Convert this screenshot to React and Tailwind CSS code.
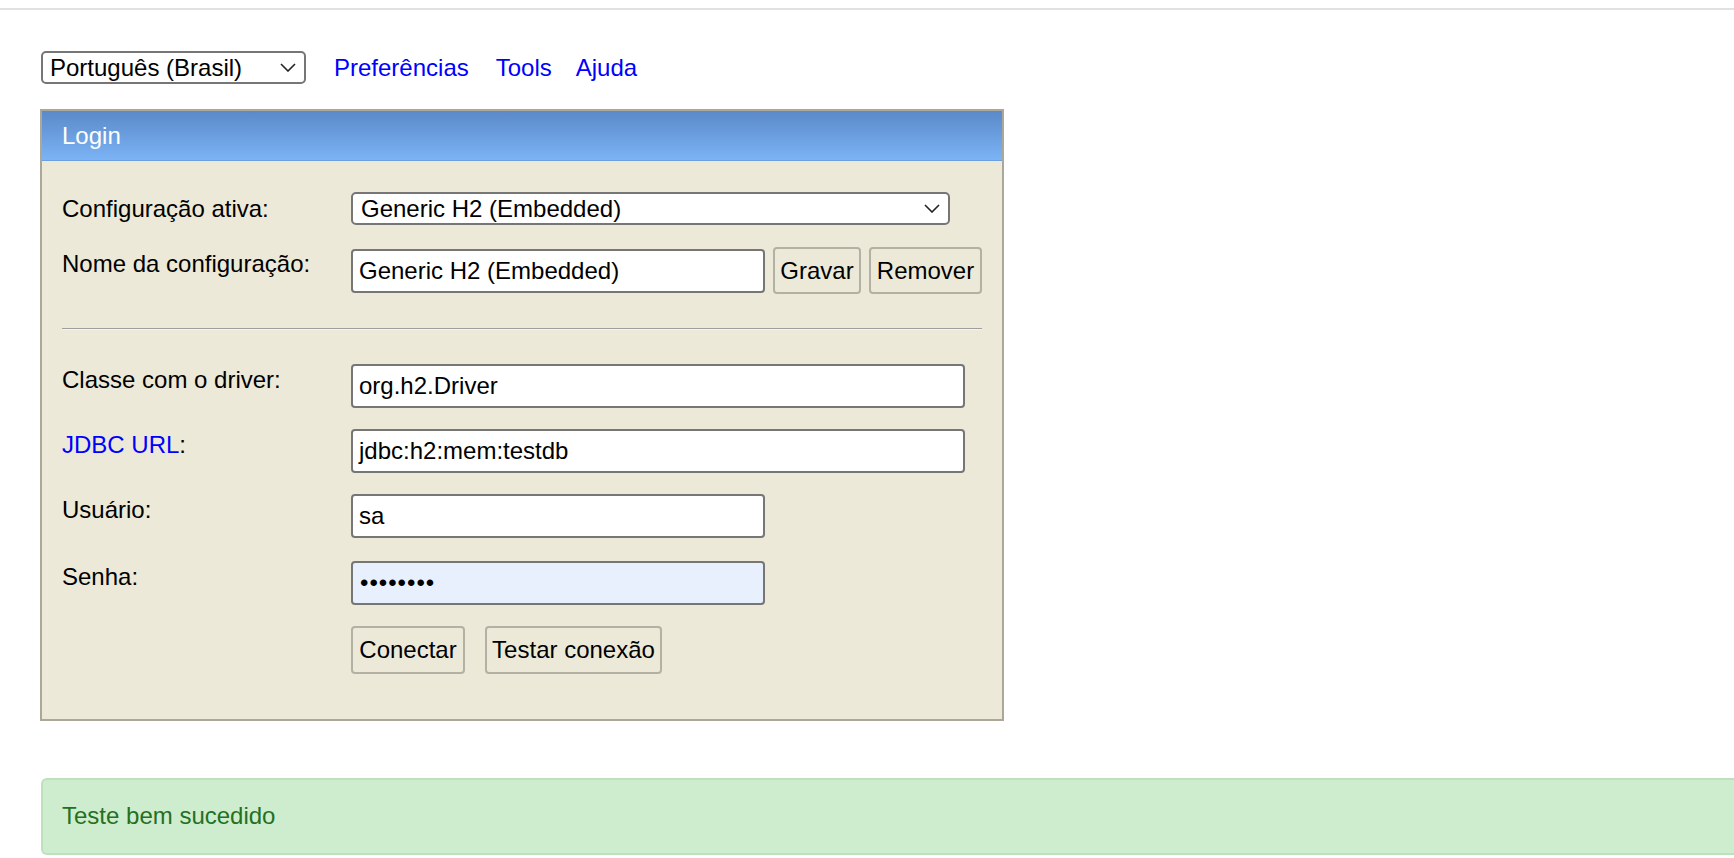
import React from "react";

function Chevron({ className }) {
  return (
    <svg className={className} width="16" height="9" viewBox="0 0 16 9" fill="none">
      <polyline points="1,1 8,8 15,1" stroke="#222" strokeWidth="1.6" fill="none" />
    </svg>
  );
}

function Field({ width, children, bg = "bg-white" }) {
  return (
    <div
      className={`${bg} h-[44px] border-2 border-[#767676] rounded-[4px] pl-[6px] flex items-center leading-[28px]`}
      style={{ width }}
    >
      {children}
    </div>
  );
}

function Btn({ w, h = "h-[47px]", children }) {
  return (
    <div
      className={`${h} border-2 border-[#b3b1a3] rounded-[4px] flex items-center justify-center leading-[28px] bg-[#ece9d8]`}
      style={{ width: w }}
    >
      {children}
    </div>
  );
}

export default function App() {
  return (
    <div
      className="w-[1734px] h-[858px] overflow-hidden bg-white text-black text-[24px] leading-[28px]"
      style={{ fontFamily: '"Liberation Sans", Arial, sans-serif' }}
    >
      <div className="mt-[8px] h-[2px] bg-[#e1e1e1]" />

      {/* toolbar */}
      <div className="mt-[41px] ml-[41px] flex items-center h-[33px]">
        <div className="w-[265px] h-[33px] border-2 border-[#767676] rounded-[5px] bg-white flex items-center pl-[7px] pr-[8px] justify-between">
          <span>Português (Brasil)</span>
          <Chevron />
        </div>
        <a className="ml-[28px] text-[#0000ff]">Preferências</a>
        <a className="ml-[27px] text-[#0000ff]">Tools</a>
        <a className="ml-[24px] text-[#0000ff]">Ajuda</a>
      </div>

      {/* login panel */}
      <div className="mt-[25px] ml-[40px] w-[964px] border-2 border-[#aca899] bg-[#ece9d8]">
        <div className="h-[50px] bg-gradient-to-b from-[#5b89c9] to-[#7bb4f5] pl-[20px] pt-[11px] text-white border-b border-[#6b9fe0]">
          Login
        </div>
        <div className="pl-[20px] pt-[31px] pb-[45px]">
          {/* row 1 */}
          <div className="flex items-start">
            <div className="w-[289px] pt-[3px]">Configuração ativa:</div>
            <div className="w-[599px] h-[33px] border-2 border-[#767676] rounded-[5px] bg-white flex items-center justify-between pl-[8px] pr-[8px]">
              <span>Generic H2 (Embedded)</span>
              <Chevron />
            </div>
          </div>

          {/* row 2 */}
          <div className="flex items-start mt-[22px]">
            <div className="w-[289px] pt-[3px]">Nome da configuração:</div>
            <div className="flex items-center">
              <Field width={414}>Generic H2 (Embedded)</Field>
              <div className="ml-[8px]">
                <Btn w={88}>Gravar</Btn>
              </div>
              <div className="ml-[8px]">
                <Btn w={113}>Remover</Btn>
              </div>
            </div>
          </div>

          {/* hr */}
          <div className="mt-[34px] w-[920px] border-t border-[#9e9e9e] border-b border-b-[#f4f4f4]" />

          {/* row 3 */}
          <div className="flex items-start mt-[34px]">
            <div className="w-[289px] pt-[2px]">Classe com o driver:</div>
            <Field width={614}>org.h2.Driver</Field>
          </div>

          {/* row 4 */}
          <div className="flex items-start mt-[21px]">
            <div className="w-[289px] pt-[2px]">
              <a className="text-[#0000ff]">JDBC URL</a>:
            </div>
            <Field width={614}>jdbc:h2:mem:testdb</Field>
          </div>

          {/* row 5 */}
          <div className="flex items-start mt-[21px]">
            <div className="w-[289px] pt-[2px]">Usuário:</div>
            <Field width={414}>sa</Field>
          </div>

          {/* row 6 */}
          <div className="flex items-start mt-[23px]">
            <div className="w-[289px] pt-[2px]">Senha:</div>
            <Field width={414} bg="bg-[#e8f0fe]">
              <span className="tracking-[1px] ml-[1px]">••••••••</span>
            </Field>
          </div>

          {/* row 7 */}
          <div className="flex items-start mt-[21px]">
            <div className="w-[289px]" />
            <Btn w={114} h="h-[48px]">Conectar</Btn>
            <div className="ml-[20px]">
              <Btn w={177} h="h-[48px]">Testar conexão</Btn>
            </div>
          </div>
        </div>
      </div>

      {/* result */}
      <div className="mt-[57px] ml-[41px] h-[77px] border-2 border-r-0 border-[#bde0bd] rounded-l-[6px] bg-[#ceedce] pl-[19px] pt-[22px] text-[#25701f]">
        Teste bem sucedido
      </div>
    </div>
  );
}
